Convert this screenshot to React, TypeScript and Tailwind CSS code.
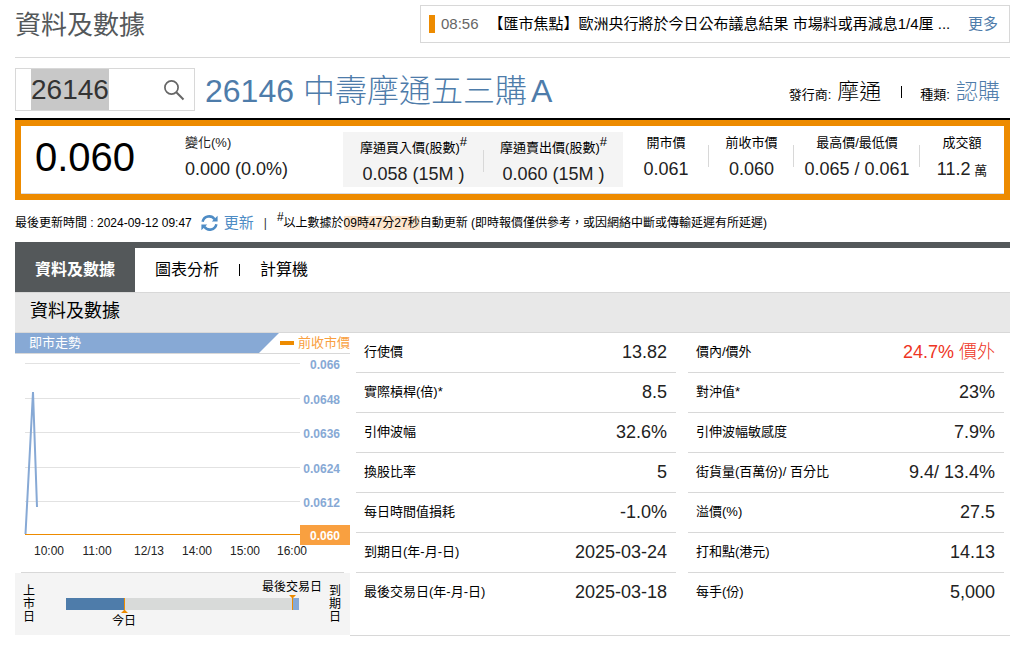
import React from "react";

type Row = { label: string; value: string; red?: boolean };

const leftRows: Row[] = [
  { label: "行使價", value: "13.82" },
  { label: "實際槓桿(倍)*", value: "8.5" },
  { label: "引伸波幅", value: "32.6%" },
  { label: "換股比率", value: "5" },
  { label: "每日時間值損耗", value: "-1.0%" },
  { label: "到期日(年-月-日)", value: "2025-03-24" },
  { label: "最後交易日(年-月-日)", value: "2025-03-18" },
];

const rightRows: Row[] = [
  { label: "價內/價外", value: "24.7% 價外", red: true },
  { label: "對沖值*", value: "23%" },
  { label: "引伸波幅敏感度", value: "7.9%" },
  { label: "街貨量(百萬份)/ 百分比", value: "9.4/ 13.4%" },
  { label: "溢價(%)", value: "27.5" },
  { label: "打和點(港元)", value: "14.13" },
  { label: "每手(份)", value: "5,000" },
];

const gridLines = [
  { y: 9, label: "0.066" },
  { y: 44, label: "0.0648" },
  { y: 78, label: "0.0636" },
  { y: 113, label: "0.0624" },
  { y: 147, label: "0.0612" },
];

const times = [
  { x: 34, label: "10:00" },
  { x: 82, label: "11:00" },
  { x: 134, label: "12/13" },
  { x: 182, label: "14:00" },
  { x: 230, label: "15:00" },
  { x: 277, label: "16:00" },
];

const Header: React.FC = () => (
  <header className="flex h-[58px] items-start justify-between border-b border-[#d8d8d8] pt-[5px]">
    <h1 className="text-[26px] leading-10 text-[#54585a]">資料及數據</h1>
    <div className="flex h-[38px] w-[590px] items-center border border-[#d8d8d8] px-2 text-[15px]">
      <span className="h-[18px] w-[6px] bg-[#ed8b00]" />
      <span className="ml-1.5 text-[#666]">08:56</span>
      <a href="#news" className="ml-2.5 min-w-0 flex-1 truncate text-black">
        【匯市焦點】歐洲央行將於今日公布議息結果 市場料或再減息1/4厘 ...
      </a>
      <a href="#more" className="mr-[3px] ml-3 text-[#4e7caa]">
        更多
      </a>
    </div>
  </header>
);

const Search: React.FC = () => (
  <div className="flex items-center pt-2.5 pb-[7px]">
    <form className="flex h-[43px] w-[180px] items-center justify-between border border-[#d8d8d8] pr-[9px] pl-[15px]">
      <input
        type="text"
        aria-label="代號"
        defaultValue="26146"
        className="h-full w-[78px] bg-[#c8c8c8] text-[28px] leading-8 text-[#333] outline-none"
      />
      <button type="button" aria-label="搜尋">
        <svg width="22" height="22" viewBox="0 0 22 22" fill="none" stroke="#666">
          <circle cx="8.5" cy="8.5" r="6.6" strokeWidth="1.7" />
          <path d="M13.3 13.3L20.5 20.5" strokeWidth="2" />
        </svg>
      </button>
    </form>
    <h2 className="ml-2.5 flex-1 pt-1 text-[32px] leading-[39px] font-light text-[#4e7caa]">
      26146 中壽摩通五三購<span className="ml-1">A</span>
    </h2>
    <div className="flex items-baseline pt-1 pr-2.5 text-[13px]">
      <span>發行商:</span>
      <span className="ml-1.5 text-[22px] font-light">摩通</span>
      <span className="mr-[18px] ml-5 h-3 w-px self-center bg-black" />
      <span>種類:</span>
      <span className="ml-1.5 text-[22px] font-light text-[#4e7caa]">認購</span>
    </div>
  </div>
);

const Cell: React.FC<{
  label: string;
  value: string;
  unit?: string;
  hash?: boolean;
  divider?: boolean;
  className: string;
}> = ({ label, value, unit, hash, divider, className }) => (
  <div className={"relative shrink-0 text-center whitespace-nowrap " + className}>
    <div className="text-[13px] leading-5">
      {label}
      {hash && <sup className="text-[13px] leading-none">#</sup>}
    </div>
    <div className="mt-1 text-[18px] leading-6 text-[#222]">
      {value}
      {unit && <span className="text-[13px]"> {unit}</span>}
    </div>
    {divider && <span className="absolute top-3 right-0 h-[22px] w-px bg-[#d8d8d8]" />}
  </div>
);

const Quote: React.FC = () => (
  <section className="border-t-2 border-black">
    <div className="flex h-20 items-start border-6 border-[#ed8b00] pl-[14px] shadow-[inset_0_-1px_0_#d8dce6]">
      <div className="w-[150px] text-[40px] leading-[62px]">0.060</div>
      <div className="flex-1 pt-[7px] text-[#222]">
        <div className="text-[13px] leading-5">變化(%)</div>
        <div className="mt-1 text-[18px] leading-6">0.000 (0.0%)</div>
      </div>
      <div className="mt-1.5 flex h-[55px] bg-[#f4f4f4] pt-1.5">
        <Cell label="摩通買入價(股數)" value="0.058 (15M )" hash divider className="w-[141px]" />
        <Cell label="摩通賣出價(股數)" value="0.060 (15M )" hash className="w-[139px]" />
      </div>
      <div className="flex pt-[7px]">
        <Cell label="開市價" value="0.061" divider className="w-[86px]" />
        <Cell label="前收市價" value="0.060" divider className="w-[85px]" />
        <Cell label="最高價/最低價" value="0.065 / 0.061" divider className="w-[126px]" />
        <Cell label="成交額" value="11.2" unit="萬" className="w-[84px]" />
      </div>
    </div>
  </section>
);

const UpdateBar: React.FC = () => (
  <div className="flex h-[42px] items-center pt-1 text-[12px] whitespace-nowrap">
    <span>最後更新時間 : 2024-09-12 09:47</span>
    <button type="button" className="ml-[9px] flex items-center gap-1.5 text-[15px] text-[#4e8cc5]">
      <svg width="17" height="16" viewBox="0 0 17 16">
        <g fill="none" stroke="#4e8cc5" strokeWidth="2.5">
          <path d="M1.6 6.8A6.7 6.7 0 0 1 13.6 4.2" />
          <path d="M15.4 9.2A6.7 6.7 0 0 1 3.4 11.8" />
        </g>
        <path d="M16.6 0.8V6.6H10.8zM0.4 15.2V9.4H6.2z" fill="#4e8cc5" />
      </svg>
      更新
    </button>
    <span className="mx-2.5 text-[#333]">|</span>
    <span>
      <sup className="text-[12px]">#</sup>以上數據於<span className="bg-[#fce5cd]">09時47分27秒</span>
      自動更新 (即時報價僅供參考，或因網絡中斷或傳輸延遲有所延遲)
    </span>
  </div>
);

const Tabs: React.FC = () => (
  <nav className="flex h-[51px] border-t-6 border-b border-t-[#54585a] border-b-[#d8d8d8] text-[16px]">
    <a href="#data" className="flex w-[120px] items-center justify-center bg-[#54585a] font-bold text-white">
      資料及數據
    </a>
    <a href="#chart" className="flex items-center px-5">
      圖表分析
    </a>
    <span className="mt-4 h-3 w-px bg-black" />
    <a href="#calc" className="flex items-center px-5">
      計算機
    </a>
  </nav>
);

const Chart: React.FC = () => (
  <div className="pb-px">
    <div className="flex h-[21px] items-start justify-between border-b border-[#d8d8d8] text-[13px] leading-5">
      <div className="h-5 w-[264px] bg-[#87a9d5] pl-[14px] text-white [clip-path:polygon(0_0,100%_0,244px_100%,0_100%)]">
        即市走勢
      </div>
      <div className="flex items-center gap-1 text-[#f9a040]">
        <span className="h-1 w-[14px] bg-[#ed8b00]" />
        前收市價
      </div>
    </div>
    <svg width="335" height="218" viewBox="0 0 335 218" className="block text-[12px]">
      {gridLines.map((g) => (
        <g key={g.label}>
          <path d={`M10 ${g.y + 0.5}H285`} stroke="#e2e2e2" />
          <text x="325" y={g.y + 6} textAnchor="end" fontWeight="bold" fill="#87a9d5">
            {g.label}
          </text>
        </g>
      ))}
      <path d="M10.5 180L18 38L22 153" fill="none" stroke="#87a9d5" strokeWidth="2" />
      <path d="M10 180.5H285" stroke="#ed8b00" />
      <rect x="285" y="171" width="50" height="20" fill="#f9a040" />
      <text x="325" y="186" textAnchor="end" fontWeight="bold" fill="#fff">
        0.060
      </text>
      {times.map((t) => (
        <text key={t.label} x={t.x} y="201" textAnchor="middle" fill="#222">
          {t.label}
        </text>
      ))}
    </svg>
    <div className="mx-1.5 h-px bg-[#d8d8d8]" />
    <div className="flex h-[62px] items-center bg-[#f4f4f4] px-2 text-[12px] leading-[13px]">
      <div className="w-3">上市日</div>
      <svg width="294" height="62" viewBox="0 0 294 62">
        <rect x="31" y="25" width="233" height="12" fill="#d8dad9" />
        <rect x="31" y="25" width="58" height="12" fill="#4e7caa" />
        <rect x="258" y="25" width="6" height="12" fill="#87a9d5" />
        <path d="M89.5 25V38M257.5 24V37" stroke="#ed8b00" />
        <path d="M86 40L89.5 36.5L93 40zM254 22H261L257.5 25.5z" fill="#ed8b00" />
        <text x="89" y="52" textAnchor="middle">
          今日
        </text>
        <text x="257" y="18" textAnchor="middle">
          最後交易日
        </text>
      </svg>
      <div className="w-3">到期日</div>
    </div>
  </div>
);

const DataTable: React.FC<{ rows: Row[] }> = ({ rows }) => (
  <table className="w-full border-separate border-spacing-0 self-start">
    <tbody>
      {rows.map((r) => (
        <tr key={r.label} className="group h-10">
          <th
            scope="row"
            className="border-b border-[#d8d8d8] p-0 pb-0.5 pl-2 text-left text-[13px] leading-5 font-normal group-last:border-0"
          >
            {r.label}
          </th>
          <td
            className={
              "border-b border-[#d8d8d8] p-0 pr-[9px] pb-0.5 text-right text-[18px] leading-6 group-last:border-0 " +
              (r.red ? "font-light text-[#ee3524]" : "text-[#222]")
            }
          >
            {r.value}
          </td>
        </tr>
      ))}
    </tbody>
  </table>
);

const App: React.FC = () => {
  return (
    <main className="bg-white pr-[17px] pb-2.5 pl-[15px] font-['Liberation_Sans','Noto_Sans_CJK_TC',sans-serif] text-black">
      <Header />
      <Search />
      <Quote />
      <UpdateBar />
      <Tabs />
      <h3 className="h-10 border-b border-[#d8d8d8] bg-[#e8e8e8] pl-[15px] text-[18px] leading-9">
        資料及數據
      </h3>
      <div className="flex">
        <div className="w-[335px] shrink-0">
          <Chart />
        </div>
        <div className="grid flex-1 grid-cols-[320fr_316fr] gap-3 border-b border-[#d8d8d8] px-1.5">
          <DataTable rows={leftRows} />
          <DataTable rows={rightRows} />
        </div>
      </div>
    </main>
  );
};

export default App;
